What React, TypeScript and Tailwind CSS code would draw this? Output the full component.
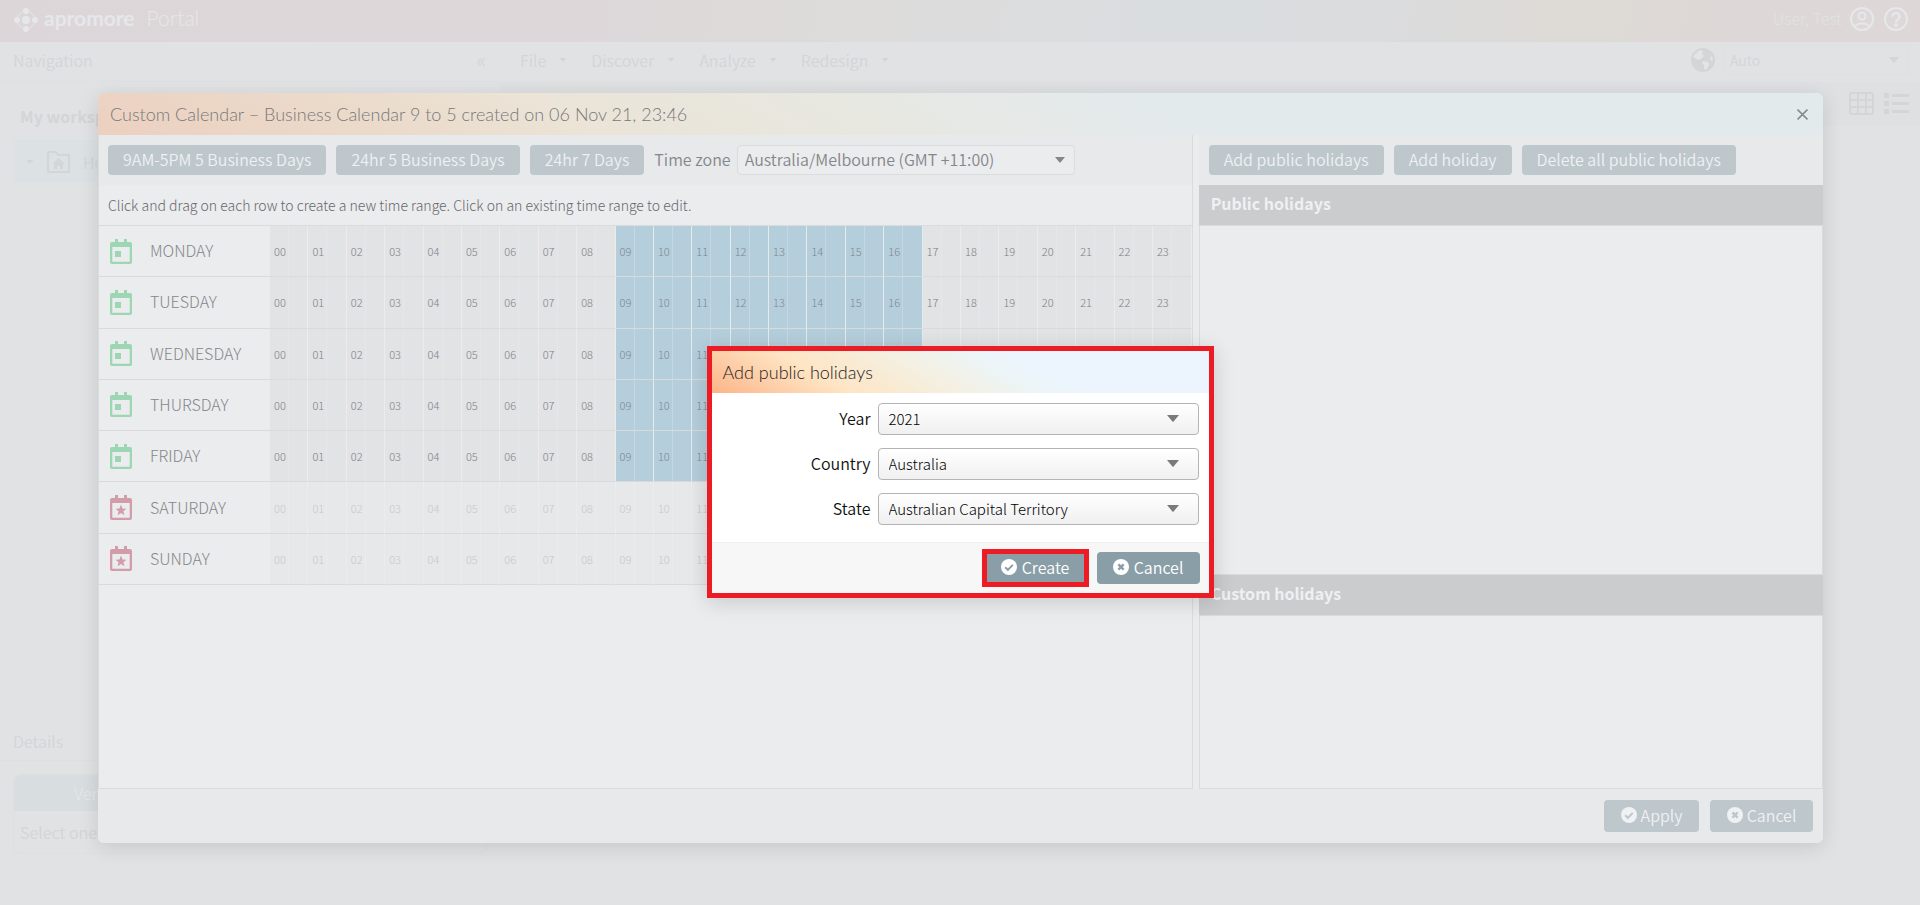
import React, { useState } from "react";
import {
  CirclePlus,
  CircleArrowDown,
  CircleArrowUp,
  CircleUser,
  Copy,
  Folder,
  Globe,
  Pencil,
  Scissors,
  Search,
  Share2,
  Trash2,
} from "lucide-react";

const HOURS = Array.from({ length: 24 }, (_, h) => String(h).padStart(2, "0"));

const DAYS = [
  { name: "MONDAY", work: true },
  { name: "TUESDAY", work: true },
  { name: "WEDNESDAY", work: true },
  { name: "THURSDAY", work: true },
  { name: "FRIDAY", work: true },
  { name: "SATURDAY", work: false },
  { name: "SUNDAY", work: false },
];

const MENUS = ["File", "Discover", "Analyze", "Redesign"];

const TOOLS = [
  { name: "Add folder", Icon: CirclePlus },
  { name: "Upload", Icon: CircleArrowUp },
  { name: "Download", Icon: CircleArrowDown },
  { name: "Publish", Icon: Globe },
  { name: "Owner", Icon: CircleUser },
  { name: "Edit", Icon: Pencil },
  { name: "Cut", Icon: Scissors },
  { name: "Copy", Icon: Copy },
  { name: "Folder", Icon: Folder },
  { name: "Delete", Icon: Trash2 },
  { name: "Share", Icon: Share2 },
  { name: "Search", Icon: Search },
];

function Caret({ className }: { className: string }) {
  return (
    <svg viewBox="0 0 12 7" className={className} fill="currentColor" aria-hidden="true">
      <path d="M0 0h12L6.8 6.2a1 1 0 0 1-1.6 0z" />
    </svg>
  );
}

function CheckCircle() {
  return (
    <svg viewBox="0 0 16 16" className="size-4" aria-hidden="true">
      <circle cx="8" cy="8" r="8" fill="currentColor" />
      <path d="M4.2 8.3l2.7 2.6 4.9-5" fill="none" className="stroke-[#8a9ea8]" strokeWidth="2" />
    </svg>
  );
}

function CrossCircle() {
  return (
    <svg viewBox="0 0 16 16" className="size-4" aria-hidden="true">
      <circle cx="8" cy="8" r="8" fill="currentColor" />
      <path d="M5.4 5.4l5.2 5.2M10.6 5.4l-5.2 5.2" fill="none" className="stroke-[#8a9ea8]" strokeWidth="2.4" />
    </svg>
  );
}

function DayIcon({ work }: { work: boolean }) {
  return (
    <svg
      viewBox="0 0 22 25"
      className={work ? "h-[25px] w-[22px] text-[#9cd6b3]" : "h-[25px] w-[22px] text-[#d29ca9]"}
      fill="currentColor"
      aria-hidden="true"
    >
      <path
        fillRule="evenodd"
        d="M5 0h3v3h6V0h3v3h3a2 2 0 0 1 2 2v18a2 2 0 0 1-2 2H2a2 2 0 0 1-2-2V5a2 2 0 0 1 2-2h3zM2.3 8v14.7h17.4V8z"
      />
      {work ? (
        <rect x="5" y="12" width="6" height="6" />
      ) : (
        <path d="M11 9.6l1.5 3.8 4 .3-3.1 2.6 1 3.9-3.4-2.1-3.4 2.1 1-3.9-3.1-2.6 4-.3z" />
      )}
    </svg>
  );
}

function Logo() {
  return (
    <svg viewBox="0 0 24 24" className="size-6" aria-hidden="true">
      <circle cx="12" cy="12" r="9" fill="none" stroke="currentColor" />
      <g fill="currentColor">
        <circle cx="12" cy="12" r="4" />
        <circle cx="12" cy="3" r="3" />
        <circle cx="12" cy="21" r="3" />
        <circle cx="3" cy="12" r="3" />
        <circle cx="21" cy="12" r="3" />
      </g>
    </svg>
  );
}

const softButton =
  "flex items-center justify-center gap-1 rounded bg-[#bdc7cc] pb-[2px] text-base leading-6 whitespace-nowrap text-[#eff1f3]";

function PortalPage() {
  return (
    <div className="min-h-screen bg-[#e1e2e4] text-[#d3d5d7]">
      <header className="flex h-[42px] items-center justify-between bg-[linear-gradient(100deg,#ddd6d8_0%,#ddd7d9_30%,#dddbd9_42%,#dcdddf_55%,#d9dde0_62%,#dbdbdc_74%,#dedad5_82%,#ddd7d8_94%)] px-3 text-[#e6e7ea]">
        <div className="flex items-center gap-1 pb-[2px] pl-[2px]">
          <Logo />
          <span className="pb-1 pl-[2px] font-[Lato] text-[21px] leading-6 font-bold">apromore</span>
          <span className="pb-1 pl-2 font-[Lato] text-[21px] leading-6 font-light">Portal</span>
        </div>
        <div className="flex items-center gap-2 pb-[5px]">
          <span className="pb-[2px] text-base leading-6 font-light text-[#e2e2e4]">User, Test</span>
          <svg viewBox="0 0 24 24" className="size-6" fill="none" stroke="currentColor" strokeWidth="2" aria-hidden="true">
            <circle cx="12" cy="12" r="11" />
            <circle cx="12" cy="9" r="3.5" />
            <path d="M5 19.5c2-4 12-4 14 0" />
          </svg>
          <svg viewBox="0 0 24 24" className="ml-[2px] size-6" fill="none" stroke="currentColor" strokeWidth="2" aria-hidden="true">
            <circle cx="12" cy="12" r="11" />
            <path d="M8.5 9.5a3.5 3.5 0 1 1 5.6 2.8c-1.4 1-2.1 1.4-2.1 3" strokeWidth="2.6" />
            <circle cx="12" cy="18" r="1" />
          </svg>
        </div>
      </header>

      <div className="flex">
        <aside className="w-[500px] shrink-0">
          <div className="flex h-10 items-center justify-between border-b border-[#dedfe1] pr-[14px] pb-1 pl-[13px] text-base leading-6">
            <span>Navigation</span>
            <span className="text-xl leading-6">«</span>
          </div>
          <div className="px-[14px] pt-[22px]">
            <h2 className="px-[6px] text-base leading-6 font-bold whitespace-nowrap">My workspace</h2>
            <div className="mt-3 flex h-[43px] items-center gap-3 bg-[#dce1e4] px-3 text-base leading-6">
              <Caret className="h-1 w-2" />
              <svg viewBox="0 0 25 24" className="h-6 w-[25px]" aria-hidden="true">
                <path
                  d="M2 22V2h8l2 3h11v17z"
                  fill="none"
                  stroke="currentColor"
                  strokeWidth="2.2"
                  strokeLinejoin="round"
                />
                <path d="M12.5 8l6.5 6h-2v5h-3v-3h-3v3H8v-5H6z" fill="currentColor" />
              </svg>
              <span>Home</span>
            </div>
          </div>
          <div className="mt-[538px] flex h-10 items-center border-b border-[#dedfe1] pl-[13px] text-base leading-6">
            Details
          </div>
          <div className="mx-[13px] mt-[13px] overflow-hidden rounded-lg border border-[#dedfe1]">
            <div className="h-9 bg-[#d8dddf] pl-[60px] text-base leading-9 text-[#e4e6e8]">Version</div>
            <div className="h-[42px] pl-[6px] text-base leading-[42px]">Select one process or log</div>
          </div>
        </aside>

        <main className="min-w-0 flex-1">
          <nav className="flex h-10 items-center justify-between pr-[11px] pb-1 pl-5">
            <div className="flex gap-6">
              {MENUS.map((m) => (
                <button key={m} type="button" className="flex items-center gap-[13px] text-base leading-6">
                  {m}
                  <Caret className="h-1 w-2" />
                </button>
              ))}
            </div>
            <div className="flex items-center gap-2">
              <svg viewBox="0 0 24 24" className="size-6" aria-hidden="true">
                <circle cx="12" cy="12" r="12" fill="currentColor" />
                <path
                  d="M4 6l5-4 3 1-1 3 2 2-3 3-3 1-3-2-2-1zM12 13l5 1 1 3-3 5-2-1v-4l-2-2zM21 8l1 4-2 1-1-3z"
                  className="fill-[#e3e4e6]"
                />
              </svg>
              <div className="relative">
                <select aria-label="Language" className="h-[30px] w-[186px] appearance-none rounded border border-[#dedfe1] px-[6px] text-sm">
                  <option>Auto</option>
                </select>
                <Caret className="pointer-events-none absolute top-3 right-[10px] h-[6px] w-[10px]" />
              </div>
            </div>
          </nav>
          <div className="flex h-[43px] items-center justify-between bg-[#dfe0e2] pr-[11px] pl-7">
            <div className="flex gap-7 text-[#cdcfd1]">
              {TOOLS.map(({ name, Icon }) => (
                <button key={name} type="button" aria-label={name}>
                  <Icon className="size-6" />
                </button>
              ))}
            </div>
            <div className="flex items-center gap-[10px]">
              <svg viewBox="0 0 25 23" className="h-[23px] w-[25px]" fill="none" stroke="currentColor" strokeWidth="2" aria-hidden="true">
                <rect x="1" y="1" width="23" height="21" rx="2" />
                <path d="M1 8h23M1 15h23M9 1v21M17 1v21" />
              </svg>
              <svg viewBox="0 0 25 21" className="h-[21px] w-[25px]" fill="currentColor" aria-hidden="true">
                <path d="M0 0h5v5H0zM0 8h5v5H0zM0 16h5v5H0zM8 1h17v3H8zM8 9h17v3H8zM8 17h17v3H8z" />
              </svg>
            </div>
          </div>
        </main>
      </div>
    </div>
  );
}

function CalendarGrid() {
  return (
    <table className="h-[360px] w-full table-fixed border-separate border-spacing-0 border-t border-[#dadbdd]">
      <colgroup>
        <col className="w-[171px]" />
        {HOURS.map((h) => (
          <col key={h} />
        ))}
      </colgroup>
      <tbody>
        {DAYS.map((d) => (
          <tr key={d.name}>
            <th scope="row" className="border-b border-[#d8dadc] p-0 pl-[11px] text-left text-base leading-6 font-light text-[#86878a]">
              <span className="flex items-center gap-[18px]">
                <DayIcon work={d.work} />
                <span className="pb-[2px]">{d.name}</span>
              </span>
            </th>
            {HOURS.map((h, i) => {
              const busy = d.work && i >= 9 && i < 17;
              const tone = busy
                ? "border-r-[#e4eaee] bg-[#b5cedb] text-[#7d8890] bg-[linear-gradient(to_right,transparent_18px,#c5d8e2_18px,#c5d8e2_19px,transparent_19px)]"
                : d.work
                  ? "border-r-[#ebecee] bg-[#e1e3e4] text-[#7f8185] bg-[linear-gradient(to_right,transparent_18px,#e5e7e8_18px,#e5e7e8_19px,transparent_19px)]"
                  : "border-r-[#ebecee] bg-[#e6e8e9] text-[#c6c8cb] bg-[linear-gradient(to_right,transparent_18px,#eaebed_18px,#eaebed_19px,transparent_19px)]";
              return (
                <td
                  key={h}
                  className={"border-r border-b border-b-[#d8dadc] p-0 pl-1 text-[11px] leading-4 font-light " + tone}
                >
                  {h}
                </td>
              );
            })}
          </tr>
        ))}
      </tbody>
    </table>
  );
}

function CalendarDialog() {
  return (
    <section
      role="dialog"
      aria-label="Custom Calendar"
      className="flex w-full flex-col overflow-hidden rounded-md bg-[#ebecee] shadow-[0_4px_20px_rgba(0,0,0,0.12)]"
    >
      <header className="flex h-[42px] items-center justify-between bg-[linear-gradient(29deg,#ecd0c0_0%,#ebdaca_16%,#ebe4d7_28%,#e8e7df_42%,#e5e9e8_54%,#e3eaec_62%)] pr-[14px] pl-3">
        <h1 className="font-[Lato] text-lg leading-6 font-light text-[#77787a]">
          Custom Calendar – Business Calendar 9 to 5 created on 06 Nov 21, 23:46
        </h1>
        <button type="button" aria-label="Close" className="p-px text-[#8a8c8e]">
          <svg viewBox="0 0 10 10" className="size-[11px]" fill="none" stroke="currentColor" strokeWidth="1.5" aria-hidden="true">
            <path d="M0.5 0.5l9 9M9.5 0.5l-9 9" />
          </svg>
        </button>
      </header>

      <div className="flex min-h-[654px] items-stretch">
        <div className="flex min-w-0 flex-[7] flex-col border-r border-b border-l border-[#dadbdd]">
          <div className="flex h-[50px] items-center gap-[10px] bg-[#e7e9eb] pl-[9px]">
            <button type="button" className={softButton + " h-[30px] px-[15px]"}>9AM-5PM 5 Business Days</button>
            <button type="button" className={softButton + " h-[30px] px-[15px]"}>24hr 5 Business Days</button>
            <button type="button" className={softButton + " h-[30px] px-[15px]"}>24hr 7 Days</button>
            <div className="flex items-center gap-[6px] text-base leading-6 text-[#85868a]">
              <label htmlFor="tz" className="pb-[2px] whitespace-nowrap">Time zone</label>
              <div className="relative">
                <select id="tz" className="block h-[30px] w-[338px] appearance-none rounded border border-[#dadcde] bg-[#ebecee] px-[7px] pb-[2px] text-base leading-6">
                  <option>Australia/Melbourne (GMT +11:00)</option>
                </select>
                <Caret className="pointer-events-none absolute top-3 right-[10px] h-[6px] w-[10px]" />
              </div>
            </div>
          </div>
          <p className="h-10 pl-[9px] text-sm leading-10 font-light text-[#66676a]">
            Click and drag on each row to create a new time range. Click on an existing time range to edit.
          </p>
          <CalendarGrid />
        </div>

        <div className="w-[6px] shrink-0" />

        <div className="flex min-w-0 flex-[4] flex-col border-b border-[#dadbdd]">
          <div className="flex h-[50px] items-center gap-[10px] bg-[#e7e9eb] pl-[10px]">
            <button type="button" className={softButton + " h-[30px] px-[15px]"}>Add public holidays</button>
            <button type="button" className={softButton + " h-[30px] px-[15px]"}>Add holiday</button>
            <button type="button" className={softButton + " h-[30px] px-[15px]"}>Delete all public holidays</button>
          </div>
          <h2 className="h-10 bg-[#cbcccd] pl-3 text-base leading-9 font-bold text-[#eff0f2]">Public holidays</h2>
          <div className="h-[350px] border border-[#dadbdd]" />
          <h2 className="h-10 bg-[#cbcccd] pl-3 text-base leading-9 font-bold text-[#eff0f2]">Custom holidays</h2>
          <div className="flex-1 border border-b-0 border-[#dadbdd]" />
        </div>
      </div>

      <footer className="flex h-[54px] items-center justify-end gap-[11px] bg-[#e7e9ea] pr-[10px]">
        <button type="button" className={softButton + " h-8 w-[95px] [&_path]:stroke-[#bdc7cc]"}>
          <CheckCircle /> Apply
        </button>
        <button type="button" className={softButton + " h-8 w-[103px] [&_path]:stroke-[#bdc7cc]"}>
          <CrossCircle /> Cancel
        </button>
      </footer>
    </section>
  );
}

function Field({ id, label, options }: { id: string; label: string; options: string[] }) {
  const [value, setValue] = useState(options[0]);
  return (
    <div className="flex items-center justify-end gap-[7px]">
      <label htmlFor={id} className="pb-[2px] text-base leading-6 text-[#111]">{label}</label>
      <div className="relative">
        <select
          id={id}
          value={value}
          onChange={(e) => setValue(e.target.value)}
          className="block h-8 w-[321px] appearance-none rounded border border-[#b4b4b4] bg-linear-to-b from-white to-[#f0f0f0] px-[10px] text-[15px] leading-5 font-light text-black"
        >
          {options.map((o) => (
            <option key={o}>{o}</option>
          ))}
        </select>
        <Caret className="pointer-events-none absolute top-3 right-5 h-[7px] w-3 text-[#7a7a7a]" />
      </div>
    </div>
  );
}

function HolidayDialog() {
  return (
    <section
      role="dialog"
      aria-label="Add public holidays"
      className="w-[507px] border-[5px] border-[#ed1c24] bg-white shadow-[0_4px_20px_rgba(0,0,0,0.15)]"
    >
      <header className="flex h-[42px] items-center bg-[linear-gradient(29deg,#fdb488_0%,#fee5c4_24%,#f5efdf_42%,#ecf5f8_58%,#ecf4fd_66%)] pl-[11px]">
        <h2 className="font-[Lato] text-lg leading-6 font-light text-[#222]">Add public holidays</h2>
      </header>
      <div className="flex flex-col gap-[13px] pt-[10px] pr-[10px] pb-[17px]">
        <Field id="year" label="Year" options={["2021"]} />
        <Field id="country" label="Country" options={["Australia"]} />
        <Field id="state" label="State" options={["Australian Capital Territory"]} />
      </div>
      <footer className="flex h-[51px] items-center justify-end gap-2 border-t border-[#f0f0f0] bg-[#f7f7f7] pr-[9px] text-base leading-6 text-white">
        <span className="border-[5px] border-[#ed1c24]">
          <button type="button" className="flex h-7 w-[97px] items-center justify-center gap-[5px] bg-[#8a9ea8] pb-[2px]">
            <CheckCircle /> Create
          </button>
        </span>
        <button type="button" className="flex h-8 w-[103px] items-center justify-center gap-[5px] rounded bg-[#8a9ea8] pb-[2px]">
          <CrossCircle /> Cancel
        </button>
      </footer>
    </section>
  );
}

export default function App() {
  return (
    <div className="relative min-h-screen overflow-hidden font-['Noto_Sans_CJK_JP','Open_Sans',sans-serif] font-[350]">
      <PortalPage />
      <div className="absolute inset-0 pt-[93px] pr-[97px] pl-[98px]">
        <CalendarDialog />
      </div>
      <div className="absolute inset-0 flex items-start justify-center pt-[346px]">
        <HolidayDialog />
      </div>
    </div>
  );
}
